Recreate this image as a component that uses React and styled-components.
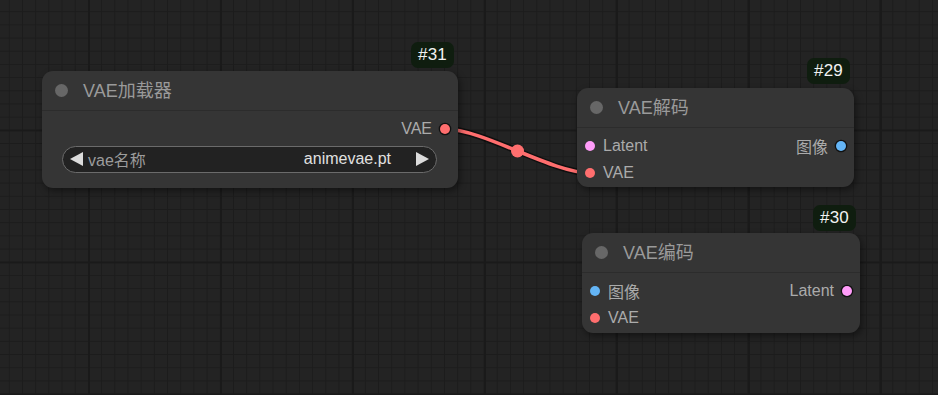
import React from "react";
import styled, { createGlobalStyle } from "styled-components";

const GlobalStyle = createGlobalStyle`
  html, body { margin: 0; padding: 0; overflow: hidden; }
  body { font-family: "Liberation Sans", Arial, "Noto Sans CJK SC", sans-serif; }
`;

const Canvas = styled.div`
  position: relative;
  width: 938px;
  height: 395px;
  overflow: hidden;
  background-color: #232323;
  background-image:
    linear-gradient(to right, #1a1a1a 2px, transparent 2px),
    linear-gradient(to bottom, #1a1a1a 2px, transparent 2px),
    linear-gradient(to right, #1c1c1c 1px, transparent 1px),
    linear-gradient(to bottom, #1c1c1c 1px, transparent 1px);
  background-size: 132px 132px, 132px 132px, 13.2px 13.2px, 13.2px 13.2px;
  background-position: 88px 0, 0 129.5px, 8.8px 0, 0 11.2px;
`;

const LinkLayer = styled.svg`
  position: absolute;
  inset: 0;
  width: 100%;
  height: 100%;
  pointer-events: none;
`;

const NodeBox = styled.div`
  position: absolute;
  left: ${(p) => p.$x}px;
  top: ${(p) => p.$y}px;
  width: ${(p) => p.$w}px;
  background: #353535;
  border-radius: 11px;
  box-shadow: 2px 3px 7px rgba(0, 0, 0, 0.45);
  padding-bottom: ${(p) => p.$pb}px;
`;

const Badge = styled.div`
  position: absolute;
  right: 4px;
  bottom: calc(100% + ${(p) => p.$gap}px);
  height: 26px;
  padding: 0 7px;
  display: flex;
  align-items: center;
  background: #0f1d0f;
  border-radius: 7px;
  color: #f2f2f2;
  font-size: 17px;
  letter-spacing: 0.2px;
`;

const TitleBar = styled.div`
  height: 40px;
  display: flex;
  align-items: center;
  padding-left: 13px;
  gap: 15px;
  border-bottom: 1px solid #2c2c2c;
  box-sizing: border-box;
`;

const TitleDot = styled.span`
  width: 13px;
  height: 13px;
  border-radius: 50%;
  background: #676767;
  flex: none;
`;

const TitleText = styled.span`
  color: #9a9a9a;
  font-size: 18px;
  line-height: 1;
  padding-top: 1px;
`;

const Body = styled.div`
  padding-top: 5px;
`;

const SlotRow = styled.div`
  height: 26.67px;
  display: grid;
  grid-template-columns: 1fr 1fr;
  align-items: center;
`;

const Slot = styled.div`
  display: flex;
  align-items: center;
  gap: 8px;
  justify-content: ${(p) => (p.$out ? "flex-end" : "flex-start")};
  padding: 0 8px;
  grid-column: ${(p) => (p.$out ? 2 : 1)};
  color: #ababab;
  font-size: 16px;
`;

const SlotDot = styled.span`
  width: 10px;
  height: 10px;
  border-radius: 50%;
  flex: none;
  background: ${(p) => p.$color};
  box-shadow: ${(p) => (p.$ring ? "0 0 0 1.3px #111" : "none")};
`;

const Combo = styled.div`
  margin: 3px 21px 0 20px;
  height: 27px;
  box-sizing: border-box;
  border: 1px solid #6b6b6b;
  border-radius: 14px;
  background: #222222;
  display: flex;
  align-items: center;
  padding: 0 7px;
  font-size: 16px;
`;

const ComboLabel = styled.span`
  color: #9c9c9c;
  margin-left: 5px;
  flex: 1;
`;

const ComboValue = styled.span`
  color: #e0e0e0;
  margin-right: 25px;
`;

const Arrow = ({ dir }) => (
  <svg width="13" height="14" viewBox="0 0 13 14" style={{ flex: "none" }}>
    {dir === "left" ? (
      <polygon points="0,7 13,0 13,14" fill="#dcdcdc" />
    ) : (
      <polygon points="13,7 0,0 0,14" fill="#dcdcdc" />
    )}
  </svg>
);

const COLORS = { VAE: "#ff6e6e", LATENT: "#ff9cf9", IMAGE: "#64b5f6" };

export default function App() {
  return (
    <>
      <GlobalStyle />
      <Canvas>
        <LinkLayer viewBox="0 0 938 395">
          <path
            d="M445 129 C483 129, 552 173, 590 173"
            fill="none"
            stroke="rgba(0,0,0,0.55)"
            strokeWidth="6.5"
          />
          <path
            d="M445 129 C483 129, 552 173, 590 173"
            fill="none"
            stroke={COLORS.VAE}
            strokeWidth="3.6"
          />
          <circle cx="517.5" cy="151" r="6.5" fill={COLORS.VAE} />
        </LinkLayer>

        <NodeBox $x={42} $y={71} $w={416} $pb={15}>
          <Badge $gap={3}>#31</Badge>
          <TitleBar>
            <TitleDot />
            <TitleText>VAE加载器</TitleText>
          </TitleBar>
          <Body>
            <SlotRow>
              <Slot $out>
                VAE
                <SlotDot $color={COLORS.VAE} $ring />
              </Slot>
            </SlotRow>
            <Combo>
              <Arrow dir="left" />
              <ComboLabel>vae名称</ComboLabel>
              <ComboValue>animevae.pt</ComboValue>
              <Arrow dir="right" />
            </Combo>
          </Body>
        </NodeBox>

        <NodeBox $x={577} $y={88} $w={277} $pb={1}>
          <Badge $gap={4}>#29</Badge>
          <TitleBar>
            <TitleDot />
            <TitleText>VAE解码</TitleText>
          </TitleBar>
          <Body>
            <SlotRow>
              <Slot>
                <SlotDot $color={COLORS.LATENT} />
                Latent
              </Slot>
              <Slot $out>
                图像
                <SlotDot $color={COLORS.IMAGE} $ring />
              </Slot>
            </SlotRow>
            <SlotRow>
              <Slot>
                <SlotDot $color={COLORS.VAE} />
                VAE
              </Slot>
            </SlotRow>
          </Body>
        </NodeBox>

        <NodeBox $x={582} $y={233} $w={278} $pb={2}>
          <Badge $gap={2}>#30</Badge>
          <TitleBar>
            <TitleDot />
            <TitleText>VAE编码</TitleText>
          </TitleBar>
          <Body>
            <SlotRow>
              <Slot>
                <SlotDot $color={COLORS.IMAGE} />
                图像
              </Slot>
              <Slot $out>
                Latent
                <SlotDot $color={COLORS.LATENT} $ring />
              </Slot>
            </SlotRow>
            <SlotRow>
              <Slot>
                <SlotDot $color={COLORS.VAE} />
                VAE
              </Slot>
            </SlotRow>
          </Body>
        </NodeBox>
      </Canvas>
    </>
  );
}
